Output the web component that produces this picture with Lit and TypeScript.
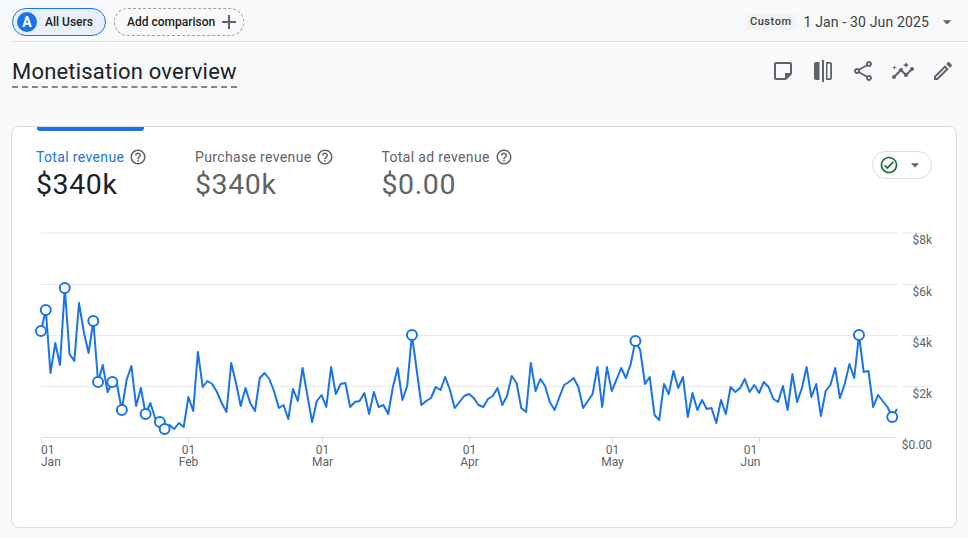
import { LitElement, html, css, svg } from "lit";
import { customElement } from "lit/decorators.js";

// daily revenue as a y position on the chart, one per day from 1 Jan
const YS = [
  331, 310, 373, 343, 365, 288, 354, 361, 303, 332, 353, 321, 382, 365, 392, 382, 385, 410, 380, 366,
  406, 388, 414, 403, 418, 422, 429, 425, 429, 423, 427, 397, 411, 352, 387, 381, 384, 392, 403, 412,
  363, 383, 406, 388, 403, 411, 378, 373, 379, 391, 408, 405, 419, 389, 401, 368, 395, 422, 401, 395,
  407, 367, 394, 384, 383, 407, 402, 401, 393, 414, 392, 407, 405, 414, 387, 368, 400, 386, 335, 370,
  405, 401, 398, 387, 390, 377, 390, 408, 402, 396, 394, 398, 405, 407, 399, 396, 388, 405, 396, 376,
  383, 408, 412, 363, 391, 379, 386, 402, 410, 397, 385, 382, 378, 387, 408, 401, 394, 367, 407, 367,
  391, 380, 368, 378, 364, 341, 350, 384, 377, 415, 420, 384, 394, 371, 388, 377, 417, 393, 410, 400,
  409, 408, 423, 400, 414, 387, 392, 388, 379, 392, 385, 393, 382, 387, 399, 402, 386, 410, 374, 402,
  388, 367, 397, 384, 416, 391, 385, 368, 398, 384, 364, 378, 335, 372, 371, 407, 395, 401, 407, 417, 409,
];
const MARKED = [0, 1, 5, 11, 12, 15, 17, 22, 25, 26, 78, 125, 172, 179];
// shift: the label of June sits left of its tick
const MONTHS = [
  { day: 0, name: "Jan", shift: 0 },
  { day: 31, name: "Feb", shift: 0 },
  { day: 59, name: "Mar", shift: 0 },
  { day: 90, name: "Apr", shift: 0 },
  { day: 120, name: "May", shift: 0 },
  { day: 151, name: "Jun", shift: -9 },
];
const GRID = [
  { y: 233, label: "$8k" },
  { y: 284.5, label: "$6k" },
  { y: 335.5, label: "$4k" },
  { y: 386.5, label: "$2k" },
];
const METRICS = [
  { label: "Total revenue", value: "$340k", active: true },
  { label: "Purchase revenue", value: "$340k", active: false },
  { label: "Total ad revenue", value: "$0.00", active: false },
];

// svg sits at page 12,220 inside the card
const px = (i: number) => 41 + (i * 856) / 180 - 12;
const py = (y: number) => y - 220;

const icon = (d: string, size = 24) => html`<svg width=${size} height=${size} viewBox="0 0 24 24" fill="currentColor"><path d=${d}></path></svg>`;

const HELP = "M11 18h2v-2h-2v2zm1-16C6.48 2 2 6.48 2 12s4.48 10 10 10 10-4.48 10-10S17.52 2 12 2zm0 18c-4.41 0-8-3.59-8-8s3.59-8 8-8 8 3.59 8 8-3.59 8-8 8zm0-14c-2.21 0-4 1.79-4 4h2c0-1.1.9-2 2-2s2 .9 2 2c0 2-3 1.75-3 5h2c0-2.25 3-2.5 3-5 0-2.21-1.79-4-4-4z";
const CARET = "M7 10l5 5 5-5z";
const PLUS = "M19 13h-6v6h-2v-6H5v-2h6V5h2v6h6v2z";
const CHECK = "M12 2C6.48 2 2 6.48 2 12s4.48 10 10 10 10-4.48 10-10S17.52 2 12 2zm0 18c-4.41 0-8-3.59-8-8s3.59-8 8-8 8 3.59 8 8-3.59 8-8 8zm4.59-12.42L10 14.17l-2.59-2.58L6 13l4 4 8-8z";
const NOTE = "M19 5v9h-5v5H5V5h14m0-2H5c-1.1 0-2 .9-2 2v14c0 1.1.9 2 2 2h10l6-6V5c0-1.1-.9-2-2-2z";
const COMPARE = "M5 3h3.5v18H5c-1.1 0-2-.9-2-2V5c0-1.1.9-2 2-2zM11 1h2v22h-2zM16 3h3c1.1 0 2 .9 2 2v14c0 1.1-.9 2-2 2h-3c-.55 0-1-.45-1-1V4c0-.55.45-1 1-1zm.5 1.8v14.4H19c.1 0 .2-.1.2-.2V5c0-.1-.1-.2-.2-.2z";
const SHARE = "M18 16.08c-.76 0-1.44.3-1.96.77L8.91 12.7c.05-.23.09-.46.09-.7s-.04-.47-.09-.7l7.05-4.11c.54.5 1.25.81 2.04.81 1.66 0 3-1.34 3-3s-1.34-3-3-3-3 1.34-3 3c0 .24.04.47.09.7L8.04 9.81C7.5 9.31 6.79 9 6 9c-1.66 0-3 1.34-3 3s1.34 3 3 3c.79 0 1.5-.31 2.04-.81l7.12 4.16c-.05.21-.08.43-.08.65 0 1.61 1.31 2.92 2.92 2.92s2.92-1.31 2.92-2.92-1.31-2.92-2.92-2.92zM18 4c.55 0 1 .45 1 1s-.45 1-1 1-1-.45-1-1 .45-1 1-1zM6 13c-.55 0-1-.45-1-1s.45-1 1-1 1 .45 1 1-.45 1-1 1zm12 7.02c-.55 0-1-.45-1-1s.45-1 1-1 1 .45 1 1-.45 1-1 1z";
const INSIGHTS = "M21 8c-1.45 0-2.26 1.44-1.93 2.51l-3.55 3.56c-.3-.09-.74-.09-1.04 0l-2.55-2.55C12.27 10.45 11.46 9 10 9c-1.45 0-2.27 1.44-1.93 2.52l-4.56 4.55C2.44 15.74 1 16.55 1 18c0 1.1.9 2 2 2 1.45 0 2.26-1.44 1.93-2.51l4.55-4.56c.3.09.74.09 1.04 0l2.55 2.55C12.73 16.55 13.54 18 15 18c1.45 0 2.27-1.44 1.93-2.52l3.56-3.55c1.07.33 2.51-.48 2.51-1.93 0-1.1-.9-2-2-2zM15 9l.94-2.07L18 6l-2.06-.93L15 3l-.92 2.07L12 6l2.08.93zM3.5 11L4 9l2-.5L4 8l-.5-2L3 8l-2 .5L3 9z";
const EDIT = "M14.06 9.02l.92.92L5.92 19H5v-.92l9.06-9.06M17.66 3c-.25 0-.51.1-.7.29l-1.83 1.83 3.75 3.75 1.83-1.83c.39-.39.39-1.02 0-1.41l-2.34-2.34c-.2-.2-.45-.29-.71-.29zm-3.6 3.19L3 17.25V21h3.75L17.81 9.94l-3.75-3.75z";

@customElement("app-root")
export class AppRoot extends LitElement {
  static styles = css`
    :host {
      display: block;
      height: 538px;
      overflow: hidden;
      background: #f8f9fa;
      font-family: Roboto, "Liberation Sans", sans-serif;
      color: #202124;
    }
    svg {
      display: block;
      flex: none;
    }
    .top {
      display: flex;
      align-items: center;
      height: 39px;
      padding: 2px 0 0 12px;
    }
    .rule {
      height: 1px;
      margin-left: 12px;
      background: #dadce0;
    }
    .chip {
      display: flex;
      align-items: center;
      box-sizing: border-box;
      height: 28px;
      border-radius: 14px;
      font-size: 12px;
      font-weight: 500;
    }
    .users {
      width: 94px;
      padding-left: 4px;
      gap: 8px;
      border: 1px solid #1a73e8;
      background: #e8f0fe;
    }
    .avatar {
      display: flex;
      align-items: center;
      justify-content: center;
      width: 20px;
      height: 20px;
      border-radius: 50%;
      background: #1a73e8;
      color: #fff;
      font-size: 14px;
      font-weight: 700;
    }
    .add {
      width: 130px;
      margin-left: 8px;
      padding-left: 12px;
      gap: 2px;
      border: 1px dashed #9aa0a6;
      color: #202124;
    }
    .add svg {
      color: #5f6368;
    }
    .range {
      display: flex;
      align-items: center;
      margin-left: auto;
      padding-right: 11px;
      color: #3c4043;
    }
    .custom {
      padding: 1px 4px 2px;
      background: #f1f3f4;
      font-size: 11px;
      font-weight: 500;
      letter-spacing: 0.55px;
      line-height: 13px;
    }
    .dates {
      margin-left: 8px;
      font-size: 14px;
      letter-spacing: 0.15px;
    }
    .range svg {
      margin-left: 8px;
      color: #5f6368;
    }
    .heading {
      display: flex;
      align-items: flex-start;
      height: 68px;
      padding: 16px 13px 0 12px;
    }
    h1 {
      margin: 0;
      border-bottom: 2px dashed #80868b;
      font-size: 22px;
      font-weight: 400;
      letter-spacing: 0.2px;
      line-height: 28px;
    }
    .tools {
      display: flex;
      gap: 16px;
      margin: 1px 0 0 auto;
      color: #5f6368;
    }
    .card {
      box-sizing: border-box;
      width: 946px;
      height: 402px;
      margin-left: 11px;
      border: 1px solid #dadce0;
      border-radius: 8px;
      background: #fff;
    }
    .accent {
      width: 107px;
      height: 4px;
      margin-left: 25px;
      border-radius: 0 0 3px 3px;
      background: #1a73e8;
    }
    .metrics {
      display: flex;
      align-items: flex-start;
      height: 73px;
      padding: 16px 24px 0 24px;
    }
    .metric {
      color: #5f6368;
    }
    .metric:nth-child(1) {
      width: 159px;
    }
    .metric:nth-child(2) {
      width: 186.5px;
    }
    .metric.active .name {
      color: #1a73e8;
    }
    .metric.active .value {
      color: #202124;
    }
    .name {
      display: flex;
      align-items: center;
      gap: 5px;
      height: 20px;
      font-size: 14px;
      letter-spacing: 0.35px;
    }
    .name svg {
      color: #5f6368;
    }
    .value {
      font-size: 28.5px;
      letter-spacing: 0.6px;
      line-height: 36px;
    }
    .status {
      display: flex;
      align-items: center;
      box-sizing: border-box;
      width: 60px;
      height: 28px;
      margin: 4px 0 0 auto;
      padding-left: 6px;
      gap: 6px;
      border: 1px solid #dadce0;
      border-radius: 14px;
      color: #5f6368;
    }
    .status .ok {
      color: #137333;
    }
    .axis {
      font-size: 12px;
      fill: #5f6368;
    }
  `;

  chart() {
    const line = YS.map((y, i) => `${px(i).toFixed(1)},${py(y)}`).join(" ");
    return svg`
      ${GRID.map(
        (g) => svg`
          <line x1="29" x2="885" y1=${py(g.y)} y2=${py(g.y)} stroke="#e8eaed"></line>
          <line x1="890" x2="920" y1=${py(g.y)} y2=${py(g.y)} stroke="#e8eaed"></line>
          <text class="axis" x="920" y=${py(g.y) + 11} text-anchor="end">${g.label}</text>
        `,
      )}
      <line x1="29" x2="885" y1=${py(437.5)} y2=${py(437.5)} stroke="#dadce0"></line>
      <text class="axis" x="920" y=${py(448.5)} text-anchor="end">$0.00</text>
      ${MONTHS.map((m) => {
        const x = Math.round(px(m.day)) + 0.5;
        const tx = (m.day === 0 ? x - 0.5 : x) + m.shift;
        return svg`
          <line x1=${x} x2=${x} y1=${py(437.5)} y2=${py(443)} stroke="#dadce0"></line>
          <text class="axis" text-anchor=${m.day === 0 ? "start" : "middle"}><tspan x=${tx} y=${py(453.5)}>01</tspan><tspan x=${tx} y=${py(465.5)}>${m.name}</tspan></text>
        `;
      })}
      <polyline points=${line} fill="none" stroke="#1a73e8" stroke-width="2" stroke-linejoin="round"></polyline>
      ${MARKED.map(
        (i) => svg`<circle cx=${px(i)} cy=${py(YS[i])} r="5" fill="#fff" stroke="#1a73e8" stroke-width="2"></circle>`,
      )}
    `;
  }

  render() {
    return html`
      <div class="top">
        <div class="chip users"><span class="avatar">A</span>All Users</div>
        <div class="chip add">Add comparison ${icon(PLUS)}</div>
        <div class="range">
          <span class="custom">Custom</span>
          <span class="dates">1 Jan - 30 Jun 2025</span>
          ${icon(CARET, 20)}
        </div>
      </div>
      <div class="rule"></div>
      <div class="heading">
        <h1>Monetisation overview</h1>
        <div class="tools">
          ${icon(NOTE)} ${icon(COMPARE)} ${icon(SHARE)} ${icon(INSIGHTS)} ${icon(EDIT)}
        </div>
      </div>
      <div class="card">
        <div class="accent"></div>
        <div class="metrics">
          ${METRICS.map(
            (m) => html`
              <div class="metric ${m.active ? "active" : ""}">
                <div class="name">${m.label} ${icon(HELP, 18)}</div>
                <div class="value">${m.value}</div>
              </div>
            `,
          )}
          <div class="status">
            <span class="ok">${icon(CHECK, 20)}</span>
            ${icon(CARET, 20)}
          </div>
        </div>
        <svg width="944" height="300" viewBox="0 0 944 300">${this.chart()}</svg>
      </div>
    `;
  }
}
